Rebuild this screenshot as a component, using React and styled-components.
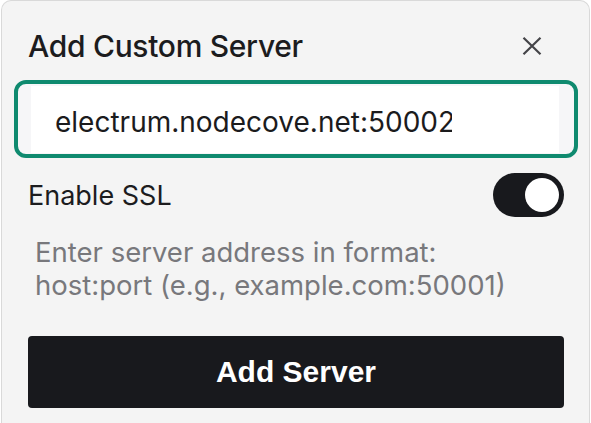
import React, { useState } from "react";
import styled, { createGlobalStyle } from "styled-components";

const GlobalStyle = createGlobalStyle`
  html, body {
    margin: 0;
    padding: 0;
    background: #ffffff;
    overflow: hidden;
  }
  body {
    font-family: "Inter", "Noto Sans", sans-serif;
    color: #1b1b1d;
  }
`;

const Page = styled.div`
  height: 423px;
  padding: 0 1px 0 1px;
  box-sizing: border-box;
`;

const Card = styled.div`
  height: 440px;
  box-sizing: border-box;
  background: #f4f4f4;
  border: 1px solid #d9d9d9;
  border-bottom: none;
  border-radius: 10px 10px 0 0;
  padding: 26px 25px 0 26px;
  display: flex;
  flex-direction: column;
`;

const Header = styled.div`
  display: flex;
  align-items: center;
  justify-content: space-between;
  height: 38px;
`;

const Title = styled.h2`
  margin: 0;
  font-size: 30px;
  font-weight: 500;
  letter-spacing: -0.3px;
  color: #1c1c1e;
`;

const CloseButton = styled.button`
  border: none;
  background: none;
  padding: 0;
  margin-right: 21px;
  width: 22px;
  height: 22px;
  display: flex;
  align-items: center;
  justify-content: center;
  color: #444448;
  cursor: pointer;
`;

const FocusRing = styled.div`
  margin: 15px -14px 0 -14px;
  border: 4px solid #0f8a6f;
  border-radius: 12px;
  padding: 2px 15px 1px 13px;
  background: #f6f6f8;
`;

const AddressInput = styled.input`
  display: block;
  width: 100%;
  box-sizing: border-box;
  height: 67px;
  border: none;
  outline: none;
  background: #ffffff;
  padding: 5px 107px 0 24px;
  font-family: "Inter", "Noto Sans", sans-serif;
  font-size: 28px;
  color: #1b1b1d;
`;

const SwitchRow = styled.div`
  display: flex;
  align-items: center;
  justify-content: space-between;
  margin-top: 15px;
`;

const Label = styled.span`
  font-size: 27px;
  color: #1c1c1e;
`;

const Track = styled.button`
  width: 71px;
  height: 44px;
  border: none;
  padding: 0 5px;
  border-radius: 22px;
  background: ${(p) => (p.$on ? "#18191d" : "#c8c8cc")};
  display: flex;
  align-items: center;
  justify-content: ${(p) => (p.$on ? "flex-end" : "flex-start")};
  cursor: pointer;
`;

const Knob = styled.span`
  width: 34px;
  height: 34px;
  border-radius: 50%;
  background: #ffffff;
`;

const Hint = styled.p`
  margin: 19px 0 0 7px;
  font-size: 27.5px;
  line-height: 33px;
  color: #78787c;
`;

const SubmitButton = styled.button`
  margin-top: 34px;
  height: 72px;
  border: none;
  border-radius: 4px;
  background: #18191d;
  color: #ffffff;
  font-family: "Liberation Sans", Arial, sans-serif;
  font-weight: 700;
  font-size: 30px;
  cursor: pointer;
`;

const CloseIcon = () => (
  <svg width="20" height="18" viewBox="0 0 20 18" fill="none">
    <path d="M1.5 0.8 L18.5 17.2 M18.5 0.8 L1.5 17.2" stroke="currentColor" strokeWidth="2.2" />
  </svg>
);

export default function App() {
  const [ssl, setSsl] = useState(true);

  return (
    <Page>
      <GlobalStyle />
      <Card>
        <Header>
          <Title>Add Custom Server</Title>
          <CloseButton aria-label="Close">
            <CloseIcon />
          </CloseButton>
        </Header>
        <FocusRing>
          <AddressInput readOnly value="electrum.nodecove.net:50002" />
        </FocusRing>
        <SwitchRow>
          <Label>Enable SSL</Label>
          <Track $on={ssl} onClick={() => setSsl(!ssl)}>
            <Knob />
          </Track>
        </SwitchRow>
        <Hint>
          Enter server address in format:
          <br />
          host:port (e.g., example.com:50001)
        </Hint>
        <SubmitButton>Add Server</SubmitButton>
      </Card>
    </Page>
  );
}
